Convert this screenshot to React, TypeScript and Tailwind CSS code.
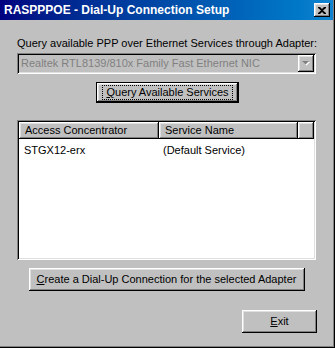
import React from 'react';

const raised =
  'bg-[#c0c0c0] shadow-[inset_-1px_-1px_#000000,inset_1px_1px_#ffffff,inset_-2px_-2px_#808080,inset_2px_2px_#dfdfdf]';
const sunken =
  'shadow-[inset_1px_1px_#808080,inset_-1px_-1px_#ffffff,inset_2px_2px_#000000,inset_-2px_-2px_#dfdfdf]';

const Btn: React.FC<{ className?: string; children: React.ReactNode }> = ({ className = '', children }) => (
  <button className={`${raised} flex items-center justify-center text-[11px] text-black whitespace-nowrap ${className}`}>
    {children}
  </button>
);

const App: React.FC = () => {
  return (
    <div
      className="w-[335px] h-[348px] bg-[#c0c0c0] flex flex-col shadow-[inset_-1px_-1px_#000000,inset_-2px_-2px_#808080] overflow-hidden"
      style={{ fontFamily: '"Liberation Sans", Arial, sans-serif' }}
    >
      {/* Title bar */}
      <div className="h-[20px] shrink-0 mr-[2px] bg-gradient-to-r from-[#000080] to-[#1084d0] flex items-center pl-[4px] pr-[3px]">
        <span className="text-white font-bold text-[12px] leading-none flex-1 whitespace-nowrap">
          RASPPPOE - Dial-Up Connection Setup
        </span>
        <button className={`${raised} w-[16px] h-[14px] flex items-center justify-center`}>
          <svg width="8" height="7" viewBox="0 0 8 7">
            <path d="M0 0h2l2 2 2-2h2v1L5 3.5 8 6v1H6L4 5 2 7H0V6l3-2.5L0 1z" fill="#000" />
          </svg>
        </button>
      </div>

      {/* Body */}
      <div className="flex-1 flex flex-col pl-[17px] pr-[19px]">
        <p className="mt-[16px] text-center text-[11px] leading-[14px] text-black whitespace-nowrap">
          Query available PPP over Ethernet Services through Adapter:
        </p>

        {/* Combobox (disabled) */}
        <div className={`mt-[3px] h-[21px] ${sunken} flex items-center pl-[4px] pr-[2px]`}>
          <span className="flex-1 text-[11px] text-[#808080] leading-none whitespace-nowrap">
            Realtek RTL8139/810x Family Fast Ethernet NIC
          </span>
          <div className={`${raised} w-[16px] h-[17px] flex items-center justify-center`}>
            <svg width="8" height="5" viewBox="0 0 8 5">
              <path d="M1 1h7L4.5 4.5z" fill="#ffffff" />
              <path d="M0 0h7L3.5 3.5z" fill="#808080" />
            </svg>
          </div>
        </div>

        {/* Query button (default) */}
        <div className="mt-[8px] flex justify-center pl-[2px]">
          <div className="border border-black">
            <Btn className="w-[141px] h-[19px]">
              <span className="border border-dotted border-black px-[3px] leading-[13px]">
                <u>Q</u>uery Available Services
              </span>
            </Btn>
          </div>
        </div>

        {/* List view */}
        <div className={`mt-[17px] h-[140px] bg-white ${sunken} p-[2px] flex flex-col`}>
          <div className="flex h-[17px] text-[11px] text-black whitespace-nowrap">
            <div className={`${raised} w-[140px] flex items-center pl-[6px]`}>Access Concentrator</div>
            <div className={`${raised} w-[139px] flex items-center pl-[6px]`}>Service Name</div>
            <div className={`${raised} flex-1`} />
          </div>
          <div className="flex text-[11px] text-black mt-[4px] leading-[14px] whitespace-nowrap">
            <span className="w-[140px] pl-[5px]">STGX12-erx</span>
            <span className="pl-[4px]">(Default Service)</span>
          </div>
        </div>

        {/* Create button */}
        <div className="mt-[8px] flex justify-center">
          <Btn className="w-[276px] h-[23px]">
            <span>
              <u>C</u>reate a Dial-Up Connection for the selected Adapter
            </span>
          </Btn>
        </div>

        {/* Exit */}
        <div className="mt-[19px] flex justify-end mr-[-1px]">
          <Btn className="w-[75px] h-[23px]">
            <span>
              <u>E</u>xit
            </span>
          </Btn>
        </div>
      </div>
    </div>
  );
};

export default App;
